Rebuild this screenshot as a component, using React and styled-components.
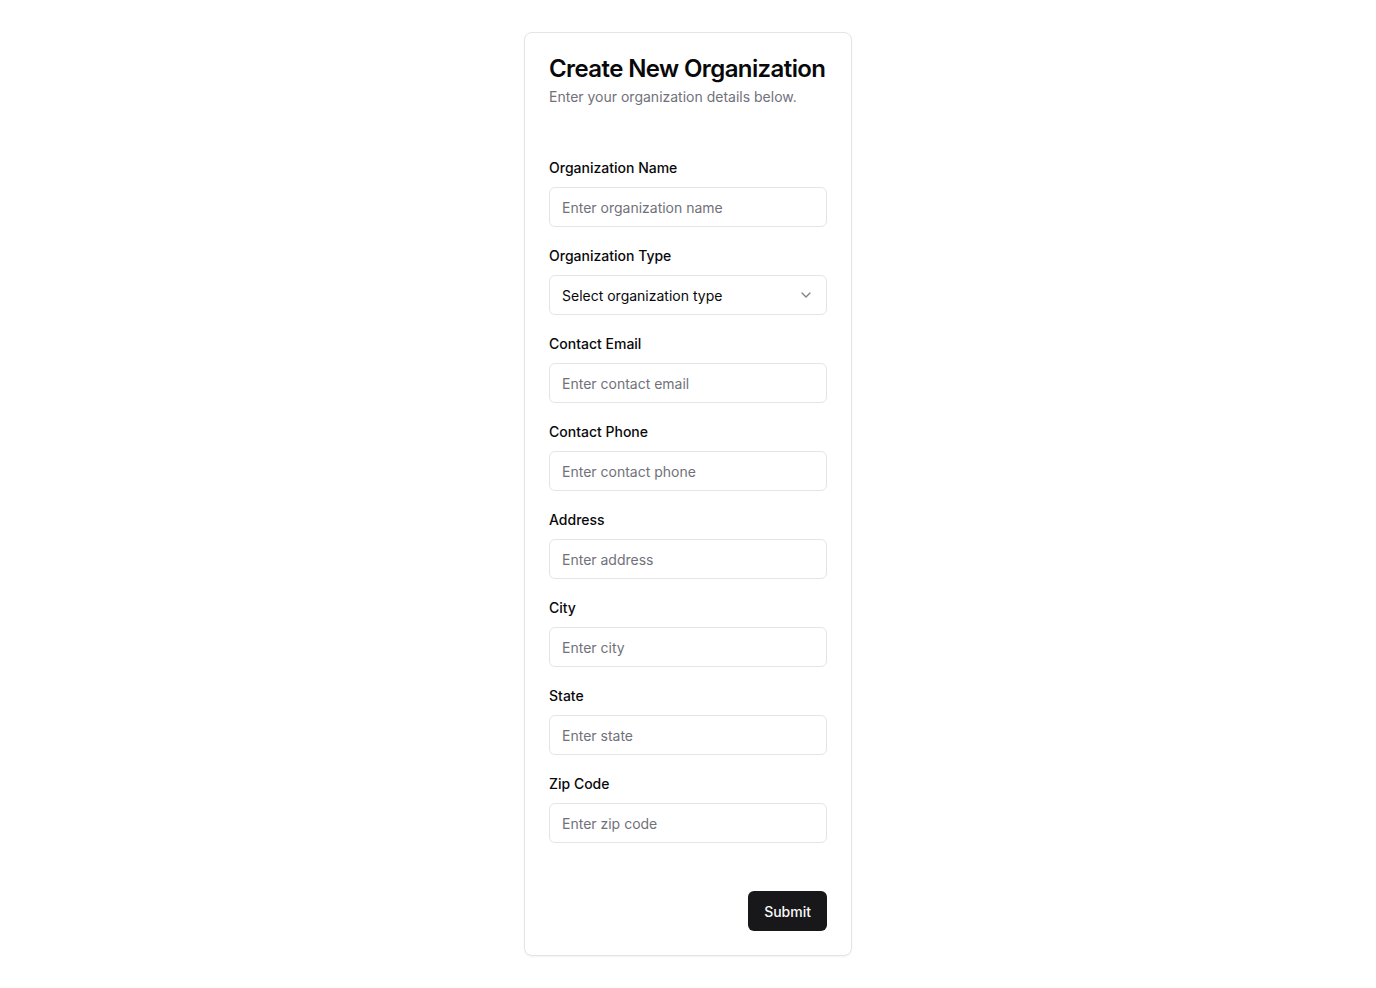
import styled, { createGlobalStyle } from "styled-components"
import { ChevronDown } from "lucide-react"

const GlobalStyle = createGlobalStyle`
  * { box-sizing: border-box; }
  body {
    margin: 0;
    background: #fff;
    font-family: Inter, "Noto Sans", sans-serif;
    color: #09090b;
  }
`;

const Page = styled.main`
  display: flex;
  justify-content: center;
  padding: 32px 0;
`;

const Card = styled.section`
  width: 328px;
  border: 1px solid #e4e4e7;
  border-radius: 8px;
  background: #fff;
  box-shadow: 0 1px 2px rgba(0, 0, 0, 0.05);
`;

const Header = styled.header`
  display: flex;
  flex-direction: column;
  gap: 6px;
  padding: 24px 24px 51px;
`;

const Title = styled.h1`
  margin: 0;
  font-size: 24px;
  line-height: 24px;
  font-weight: 600;
  letter-spacing: -0.025em;
  white-space: nowrap;
`;

const Subtitle = styled.p`
  margin: 0;
  font-size: 14px;
  line-height: 20px;
  color: #71717a;
`;

const Form = styled.form`
  display: flex;
  flex-direction: column;
`;

const Fields = styled.div`
  display: flex;
  flex-direction: column;
  gap: 19px;
  padding: 0 24px 24px;
`;

const Field = styled.div`
  display: flex;
  flex-direction: column;
  gap: 9px;
`;

const Label = styled.label`
  font-size: 14px;
  line-height: 20px;
  font-weight: 500;
  color: #09090b;
`;

const Input = styled.input`
  height: 40px;
  width: 100%;
  border: 1px solid #e4e4e7;
  border-radius: 6px;
  padding: 0 12px;
  font-family: inherit;
  font-size: 14px;
  color: #09090b;
  background: #fff;
  outline: none;
  &::placeholder { color: #71717a; }
`;

const SelectBox = styled.button`
  height: 40px;
  width: 100%;
  display: flex;
  align-items: center;
  justify-content: space-between;
  border: 1px solid #e4e4e7;
  border-radius: 6px;
  padding: 0 12px;
  background: #fff;
  font-family: inherit;
  font-size: 14px;
  color: #09090b;
  svg { opacity: 0.5; }
`;

const Footer = styled.div`
  display: flex;
  justify-content: flex-end;
  padding: 24px;
`;

const SubmitButton = styled.button`
  height: 40px;
  padding: 0 16px;
  border: none;
  border-radius: 6px;
  background: #18181b;
  color: #fafafa;
  font-family: inherit;
  font-size: 14px;
  font-weight: 500;
  cursor: pointer;
`;

const fields = [
  { id: "name", label: "Organization Name", placeholder: "Enter organization name" },
  { id: "type", label: "Organization Type", select: "Select organization type" },
  { id: "email", label: "Contact Email", placeholder: "Enter contact email" },
  { id: "phone", label: "Contact Phone", placeholder: "Enter contact phone" },
  { id: "address", label: "Address", placeholder: "Enter address" },
  { id: "city", label: "City", placeholder: "Enter city" },
  { id: "state", label: "State", placeholder: "Enter state" },
  { id: "zip", label: "Zip Code", placeholder: "Enter zip code" },
];

export default function App() {
  return (
    <>
      <GlobalStyle />
      <Page>
        <Card>
          <Header>
            <Title>Create New Organization</Title>
            <Subtitle>Enter your organization details below.</Subtitle>
          </Header>
          <Form onSubmit={(e) => e.preventDefault()}>
            <Fields>
              {fields.map((f) => (
                <Field key={f.id}>
                  <Label htmlFor={f.id}>{f.label}</Label>
                  {f.select ? (
                    <SelectBox type="button" id={f.id}>
                      <span>{f.select}</span>
                      <ChevronDown size={16} />
                    </SelectBox>
                  ) : (
                    <Input id={f.id} placeholder={f.placeholder} />
                  )}
                </Field>
              ))}
            </Fields>
            <Footer>
              <SubmitButton type="submit">Submit</SubmitButton>
            </Footer>
          </Form>
        </Card>
      </Page>
    </>
  )
}
